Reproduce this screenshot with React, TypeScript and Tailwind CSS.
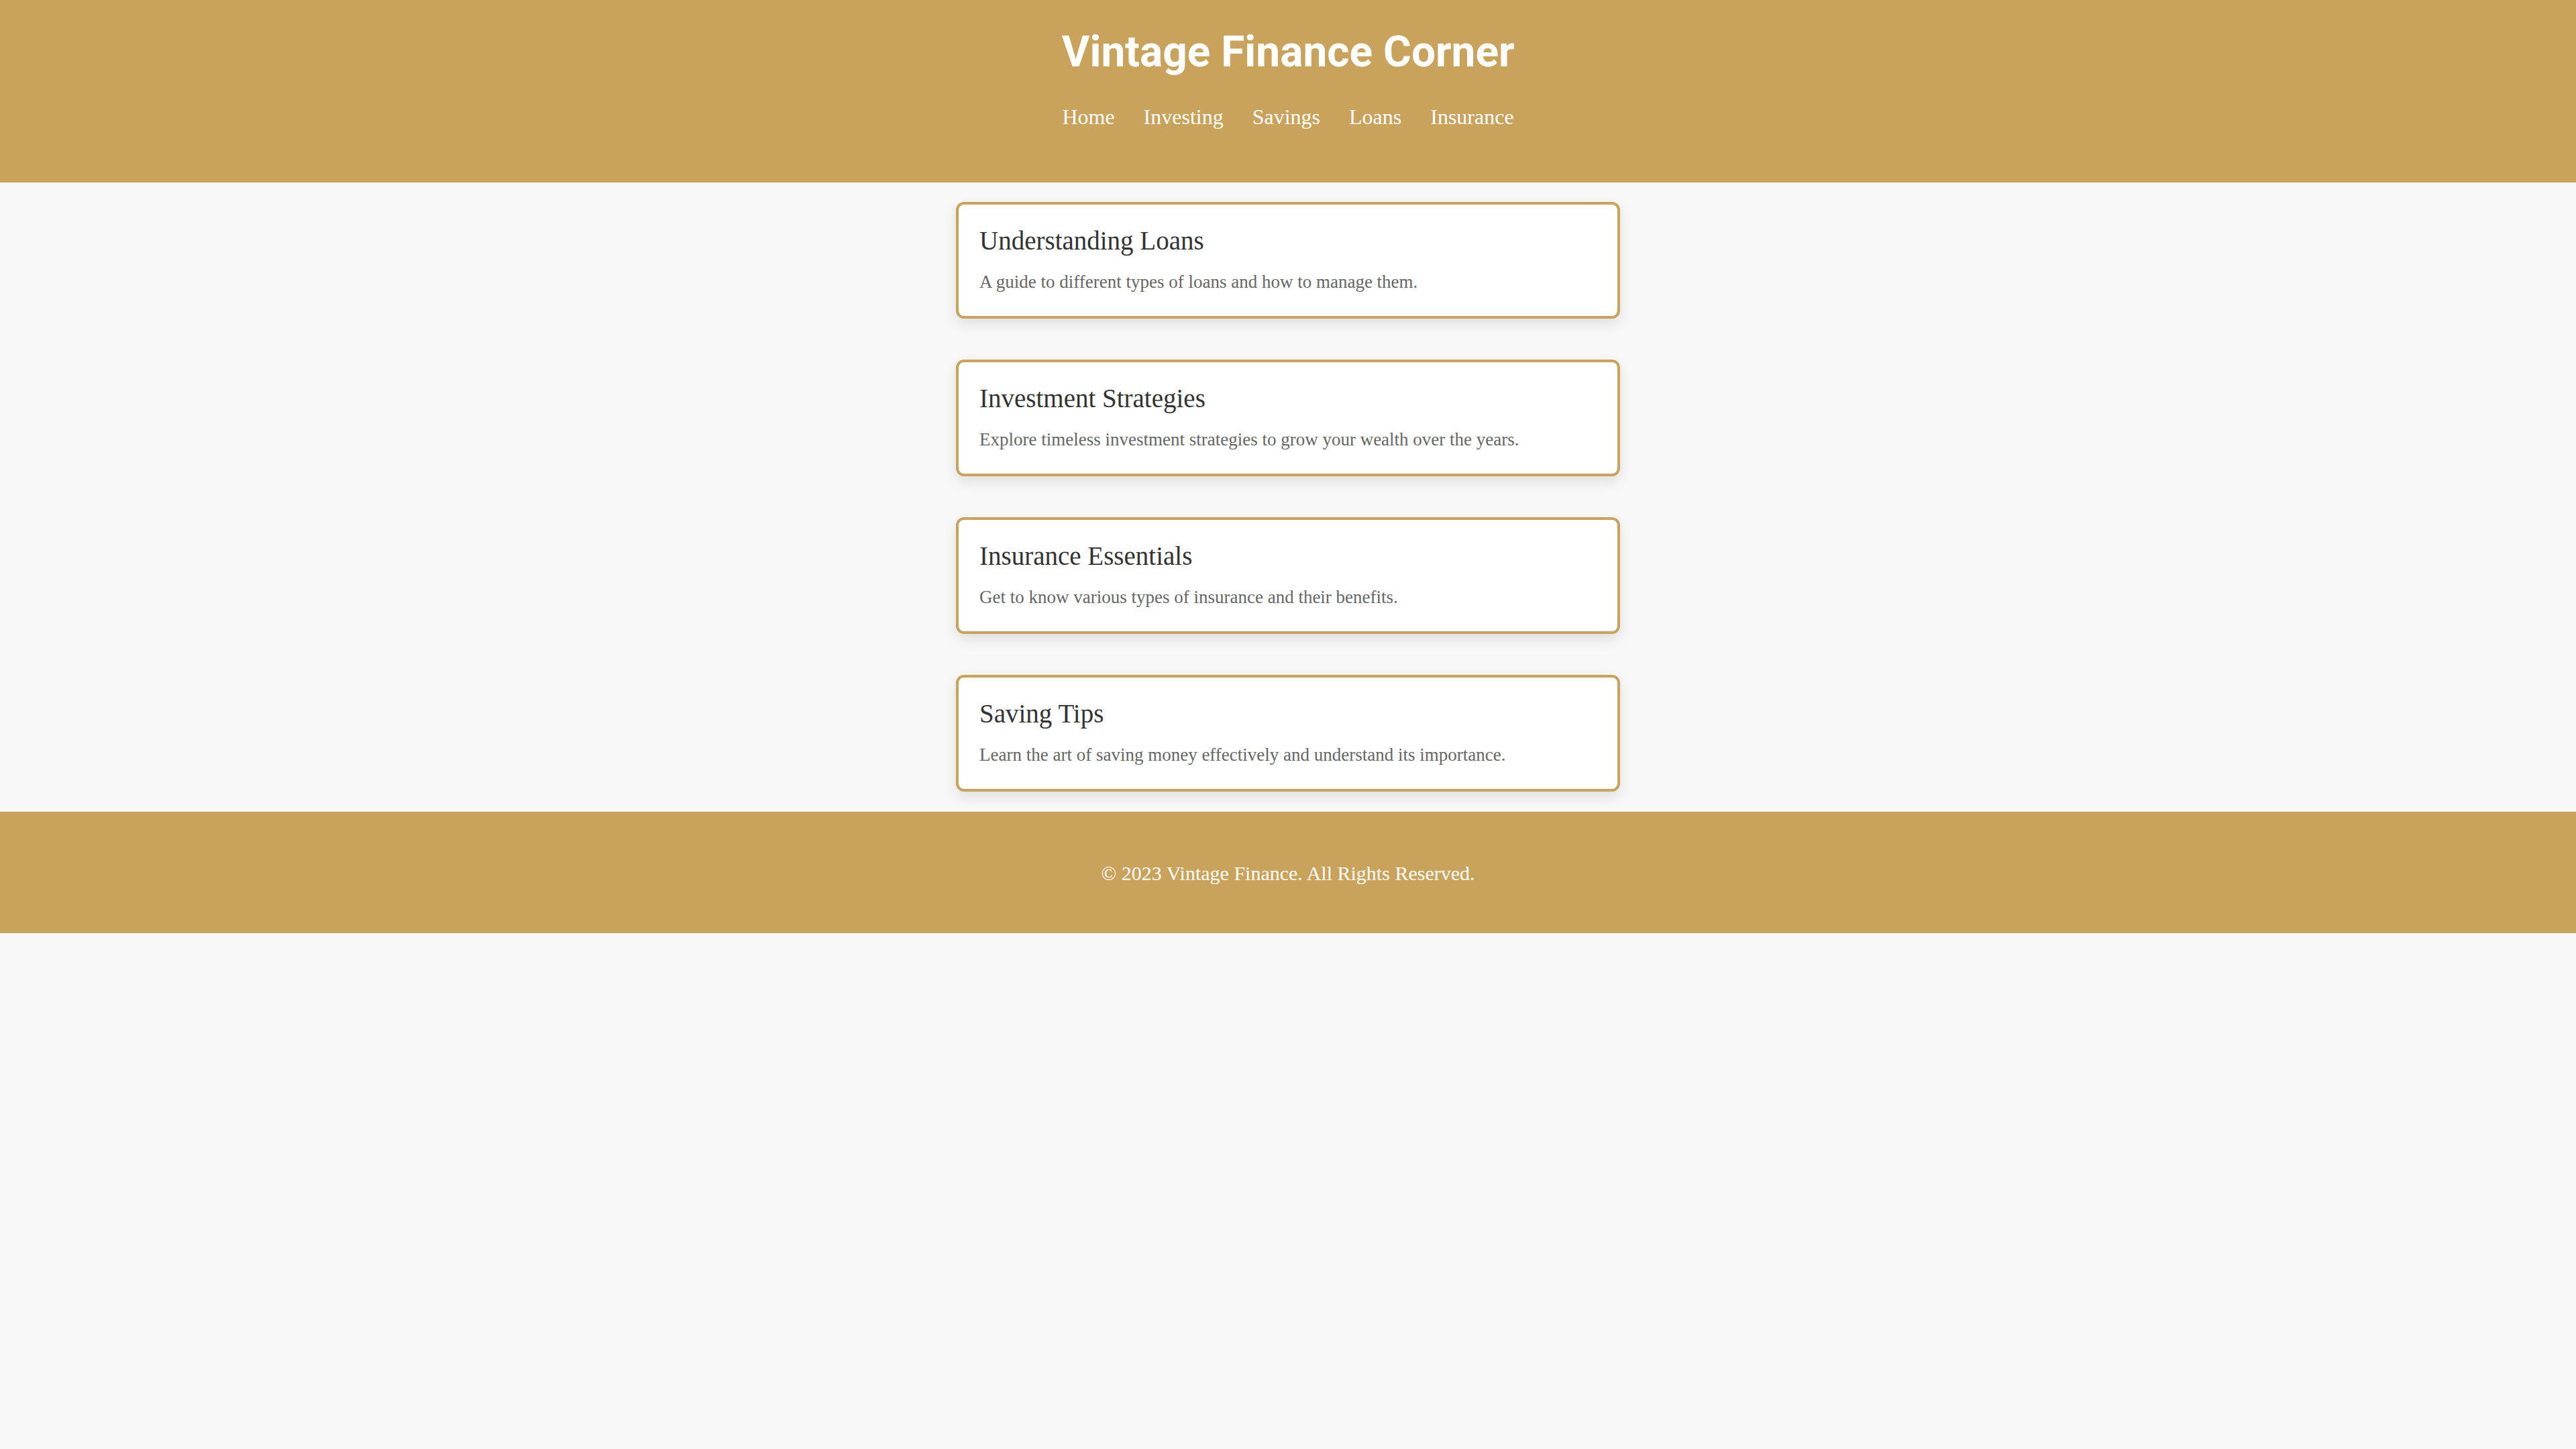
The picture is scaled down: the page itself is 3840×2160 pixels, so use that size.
import React from 'react';

interface Article {
  id: string;
  title: string;
  summary: string;
}

const navLinks = ['Home', 'Investing', 'Savings', 'Loans', 'Insurance'];

const articles: Article[] = [
  {
    id: 'loans',
    title: 'Understanding Loans',
    summary: 'A guide to different types of loans and how to manage them.'
  },
  {
    id: 'investing',
    title: 'Investment Strategies',
    summary: 'Explore timeless investment strategies to grow your wealth over the years.'
  },
  {
    id: 'insurance',
    title: 'Insurance Essentials',
    summary: 'Get to know various types of insurance and their benefits.'
  },
  {
    id: 'saving',
    title: 'Saving Tips',
    summary: 'Learn the art of saving money effectively and understand its importance.'
  }
];

const serif = "font-['Liberation_Serif','Times_New_Roman',serif]";

const ArticleCard: React.FC<{ article: Article }> = ({ article }) => (
  <div className="w-[990px] rounded-[12px] border-4 border-[#c9a25c] bg-white pl-[31px] pr-8 pt-[31px] pb-[35px] shadow-[0_8px_20px_rgba(0,0,0,0.1)]">
    <h2 className="text-[39px] leading-[45px] text-[#333333]">{article.title}</h2>
    <p className="mt-[23px] text-[27px] leading-[32px] text-[#666666]">{article.summary}</p>
  </div>
);

export default function App() {
  return (
    <div className={`min-h-screen bg-[#f8f8f8] ${serif}`}>
      {/* Header */}
      <header className="flex h-[272px] flex-col items-center bg-[#c9a25c] pt-[40px] text-white">
        <h1 className="font-['Roboto',sans-serif] text-[64px] font-bold leading-[75px]">
          Vintage Finance Corner
        </h1>
        <nav className="mt-[39px] flex gap-[43px] text-[32px] leading-[40px]">
          {navLinks.map((link) => (
            <a key={link} href="#" className="text-white">
              {link}
            </a>
          ))}
        </nav>
      </header>

      {/* Articles */}
      <main className="flex flex-col items-center gap-[61px] pt-[29px] pb-[30px]">
        {articles.map((article) => (
          <ArticleCard key={article.id} article={article} />
        ))}
      </main>

      {/* Footer */}
      <footer className="flex h-[181px] items-start justify-center bg-[#c9a25c] pt-[74px]">
        <p className="text-[30px] leading-[36px] text-white">© 2023 Vintage Finance. All Rights Reserved.</p>
      </footer>
    </div>
  );
}
